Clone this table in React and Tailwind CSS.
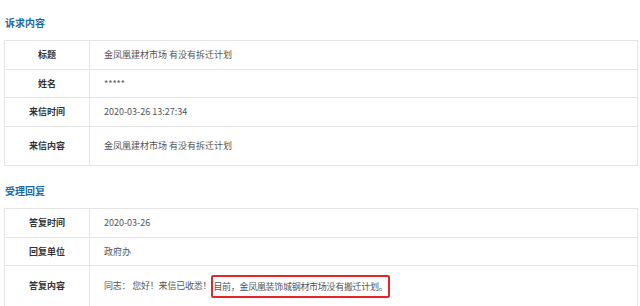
import React from "react";

const font = { fontFamily: '"Noto Sans CJK SC", "Noto Sans", sans-serif' };

function Row({ label, h, children, last }) {
  return (
    <div className={`flex ${last ? "" : "border-b border-[#e4e4e4]"}`} style={{ height: h }}>
      <div className="w-[85px] shrink-0 border-r border-[#e4e4e4] flex items-center justify-center text-[9px] font-bold text-[#333]">
        {label}
      </div>
      <div className="flex-1 flex items-center pl-[14px] text-[9px] text-[#555]">{children}</div>
    </div>
  );
}

export default function App() {
  return (
    <div className="w-[640px] h-[306px] bg-white overflow-hidden pl-[4px] pr-[2px]" style={font}>
      <div className="pt-[16px] h-[29px] pl-[1px] text-[10px] font-bold text-[#1c6aa6] leading-[13px]">诉求内容</div>
      <div className="mt-[11px] border border-[#e4e4e4]">
        <Row label="标题" h={29}>金凤凰建材市场 有没有拆迁计划</Row>
        <Row label="姓名" h={28}>*****</Row>
        <Row label="来信时间" h={29}>2020-03-26 13:27:34</Row>
        <Row label="来信内容" h={38} last>金凤凰建材市场 有没有拆迁计划</Row>
      </div>
      <div className="mt-[18px] h-[13px] pl-[1px] text-[10px] font-bold text-[#1c6aa6] leading-[13px]">受理回复</div>
      <div className="mt-[11px] border border-[#e4e4e4]">
        <Row label="答复时间" h={29}>2020-03-26</Row>
        <Row label="回复单位" h={28}>政府办</Row>
        <Row label="答复内容" h={40} last>
          <span className="tracking-[-0.2px]">同志：&nbsp;您好！来信已收悉！</span>
          <span className="border-2 border-[#e8262a] rounded-[2px] pl-0 pr-[1px] py-[3px] leading-[13px] tracking-[-0.3px]">目前，金凤凰装饰城钢材市场没有搬迁计划。</span>
        </Row>
      </div>
    </div>
  );
}
